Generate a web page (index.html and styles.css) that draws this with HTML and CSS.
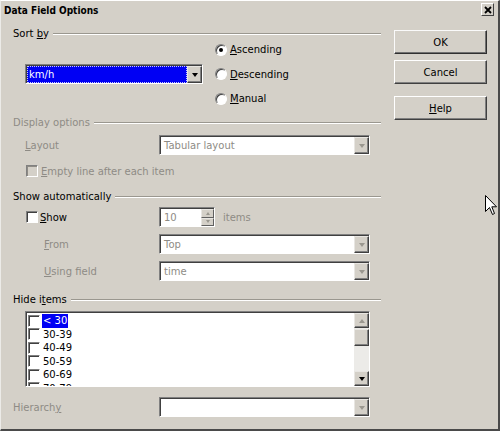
FILE: index.html
```html
<!DOCTYPE html>
<html>
<head>
<meta charset="utf-8">
<link rel="stylesheet" href="styles.css">
</head>
<body>
<div class="win">
  <div class="titlebar">
    <span class="title">Data Field Options</span>
    <span class="close"><svg width="8" height="8" viewBox="0 0 8 8"><path d="M1 1L7 7M7 1L1 7" stroke="#000" stroke-width="1.8"/></svg></span>
  </div>
  <div class="body">
    <div class="main">
      <div class="hdr"><span>Sort <u>b</u>y</span><i class="rule"></i></div>
      <div class="sortbody">
        <div class="combo sortcombo">
          <div class="field sel"><span>km/h</span></div>
          <div class="dd"><i class="tri"></i></div>
        </div>
        <div class="radios">
          <div class="radio"><i class="rb on"></i><span><u>A</u>scending</span></div>
          <div class="radio"><i class="rb"></i><span><u>D</u>escending</span></div>
          <div class="radio"><i class="rb"></i><span><u>M</u>anual</span></div>
        </div>
      </div>

      <div class="hdr dis m-hdr1"><span>Display options</span><i class="rule"></i></div>
      <div class="row m-layout">
        <span class="lbl dis ind1"><u>L</u>ayout</span>
        <div class="combo wide"><div class="field dis"><span>Tabular layout</span></div><div class="dd"><i class="tri grey"></i></div></div>
      </div>
      <div class="chkrow m-empty dis">
        <i class="cb off"></i><span><u>E</u>mpty line after each item</span>
      </div>

      <div class="hdr m-hdr2"><span>Show automatically</span><i class="rule"></i></div>
      <div class="row m-show">
        <div class="showlbl"><i class="cb"></i><span><u>S</u>how</span></div>
        <div class="spin">
          <div class="field dis"><span>10</span></div>
          <div class="spinbtns"><div class="sb"><i class="tri-up grey"></i></div><div class="sb"><i class="tri grey small"></i></div></div>
        </div>
        <span class="items dis">items</span>
      </div>
      <div class="row m-from">
        <span class="lbl dis ind2"><u>F</u>rom</span>
        <div class="combo wide"><div class="field dis"><span>Top</span></div><div class="dd"><i class="tri grey"></i></div></div>
      </div>
      <div class="row m-from">
        <span class="lbl dis ind2"><u>U</u>sing field</span>
        <div class="combo wide"><div class="field dis"><span>time</span></div><div class="dd"><i class="tri grey"></i></div></div>
      </div>

      <div class="hdr m-hdr2"><span>Hide i<u>t</u>ems</span><i class="rule"></i></div>
      <div class="list">
        <div class="listitems">
          <div class="li"><i class="cb"></i><span class="hl">&lt; 30</span></div>
          <div class="li"><i class="cb"></i><span>30-39</span></div>
          <div class="li"><i class="cb"></i><span>40-49</span></div>
          <div class="li"><i class="cb"></i><span>50-59</span></div>
          <div class="li"><i class="cb"></i><span>60-69</span></div>
          <div class="li"><i class="cb"></i><span>70-79</span></div>
        </div>
        <div class="scroll">
          <div class="sbtn"><i class="tri-up grey"></i></div>
          <div class="thumb"></div>
          <div class="track"></div>
          <div class="sbtn"><i class="tri"></i></div>
        </div>
      </div>
      <div class="row m-hier">
        <span class="lbl dis ind0">Hierarch<u>y</u></span>
        <div class="combo wide"><div class="field dis"><span></span></div><div class="dd"><i class="tri grey"></i></div></div>
      </div>
    </div>

    <div class="buttons">
      <div class="btn def">OK</div>
      <div class="btn">Cancel</div>
      <div class="btn help"><u>H</u>elp</div>
    </div>
  </div>
  <svg class="cursor" width="13" height="21" viewBox="0 0 13 21"><path d="M0.5 0.5V16.5L4.5 12.5L7.5 19.5L9.5 18.5L6.8 11.8H11.5Z" fill="#fff" stroke="#000" stroke-width="1"/></svg>
</div>
</body>
</html>
```

FILE: styles.css
```css
* { box-sizing: border-box; }
html, body { margin: 0; padding: 0; }
body {
  width: 500px; height: 431px; overflow: hidden;
  background: #d4d0c8;
  font-family: "DejaVu Sans", "Liberation Sans", sans-serif;
  font-size: 10px; color: #000;
}
u { text-decoration: underline; text-underline-offset: 1px; }
.win {
  position: relative; width: 500px; height: 431px;
  background: #d4d0c8;
  border-top: 1px solid #fff; border-left: 1px solid #ecebe8;
  border-right: 2px solid #4a4a4a; border-bottom: 2px solid #4a4a4a;
}
.titlebar {
  height: 20px; display: flex; align-items: center; justify-content: space-between;
  padding: 0 4px 0 3px;
}
.title {
  font-family: "DejaVu Sans Condensed", "DejaVu Sans", sans-serif;
  font-stretch: condensed; font-weight: bold; font-size: 10px;
  margin-top: -1px;
}
.close {
  width: 13px; height: 13px; margin-top: -3px;
  display: flex; align-items: center; justify-content: center;
  border-top: 1px solid #fff; border-left: 1px solid #fff;
  border-right: 1px solid #404040; border-bottom: 1px solid #404040;
}
.body { display: flex; padding-left: 12px; }
.main { width: 368px; padding-top: 6px; }
.buttons { width: 93px; margin-left: 13px; padding-top: 9px; display: flex; flex-direction: column; }
.btn {
  height: 24px; display: flex; align-items: center; justify-content: center;
  border-top: 1px solid #fff; border-left: 1px solid #fff;
  border-right: 1px solid #404040; border-bottom: 1px solid #404040;
  box-shadow: inset -1px -1px 0 #808080;
  margin-bottom: 6px;
}
.btn.def { border-color: #fafafa #303030 #303030 #fafafa; box-shadow: inset -1px -1px 0 #707070; }
.btn.help { margin-top: 6px; }

.hdr { height: 12px; display: flex; align-items: center; white-space: nowrap; }
.hdr .rule {
  flex: 1; height: 2px; margin-left: 4px; margin-top: 1px;
  border-top: 1px solid #9a978f; border-bottom: 1px solid #fff;
}
.dis { color: #8e8b85; }

.sortbody { height: 70px; display: flex; align-items: center; }
.combo { display: flex; height: 20px;
  border-top: 1px solid #808080; border-left: 1px solid #808080;
  border-right: 1px solid #fff; border-bottom: 1px solid #fff;
  box-shadow: inset 1px 1px 0 #404040;
  padding: 1px 0 0 1px; background: #fff;
}
.sortcombo { width: 178px; margin-left: 12px; }
.wide { width: 211px; }
.field { flex: 1; display: flex; align-items: center; padding-left: 3px; background: #fff; }
.field.sel { background: #0000f4; color: #fff; outline: 1px dotted #c8c8ff; outline-offset: -1px; padding-left: 2px; }
.dd {
  width: 15px; display: flex; align-items: center; justify-content: center;
  background: #d4d0c8;
  border-top: 1px solid #e8e6e2; border-left: 1px solid #e8e6e2;
  border-right: 1px solid #404040; border-bottom: 1px solid #404040;
  box-shadow: inset -1px -1px 0 #808080;
}
.tri { width: 0; height: 0; border-left: 3.5px solid transparent; border-right: 3.5px solid transparent; border-top: 4px solid #000; }
.tri-up { width: 0; height: 0; border-left: 3.5px solid transparent; border-right: 3.5px solid transparent; border-bottom: 4px solid #000; }
.tri.grey { border-top-color: #9a978f; }
.tri-up.grey { border-bottom-color: #9a978f; }
.tri.small, .sb .tri-up { border-left-width: 2.5px; border-right-width: 2.5px; border-top-width: 3px; }
.sb .tri-up { border-top-width: 0; border-bottom-width: 3px; }

.radios { margin-left: 12px; display: flex; flex-direction: column; gap: 4.5px; }
.radio { height: 20px; display: flex; align-items: center; }
.rb {
  width: 12px; height: 12px; border-radius: 50%; margin-right: 3px;
  background: #fff;
  border-top: 1px solid #808080; border-left: 1px solid #808080;
  border-right: 1px solid #fff; border-bottom: 1px solid #fff;
  box-shadow: inset 1px 1px 0 #404040;
  position: relative;
}
.rb.on::after { content: ""; position: absolute; left: 3px; top: 3px; width: 4px; height: 4px; border-radius: 50%; background: #000; }

.m-hdr1 { margin-top: 7px; }
.m-hdr2 { margin-top: 12px; }
.row { height: 20px; display: flex; align-items: center; }
.m-layout { margin-top: 7px; }
.m-show { margin-top: 5px; }
.m-from { margin-top: 7px; }
.m-hier { margin-top: 10px; }
.lbl { width: 146px; }
.ind1 { padding-left: 12px; }
.ind2 { padding-left: 31px; }
.ind0 { padding-left: 0; }

.cb {
  width: 12px; height: 12px; flex: none; background: #fff;
  border-top: 1px solid #808080; border-left: 1px solid #808080;
  border-right: 1px solid #fff; border-bottom: 1px solid #fff;
  box-shadow: inset 1px 1px 0 #404040;
}
.cb.off { background: #d4d0c8; box-shadow: inset 1px 1px 0 #8e8b85; }
.chkrow { margin-top: 9px; height: 14px; display: flex; align-items: center; padding-left: 13px; gap: 3px; }
.showlbl { width: 146px; display: flex; align-items: center; padding-left: 13px; gap: 2px; }

.spin { width: 56px; height: 20px; display: flex;
  border-top: 1px solid #808080; border-left: 1px solid #808080;
  border-right: 1px solid #fff; border-bottom: 1px solid #fff;
  box-shadow: inset 1px 1px 0 #404040; padding: 1px 0 0 1px; background: #fff; }
.spinbtns { width: 13px; display: flex; flex-direction: column; background: #d4d0c8; }
.sb { flex: 1; display: flex; align-items: center; justify-content: center;
  border-top: 1px solid #e8e6e2; border-left: 1px solid #e8e6e2;
  border-right: 1px solid #606060; border-bottom: 1px solid #606060; }
.items { margin-left: 8px; }

.list {
  margin-top: 6px; margin-left: 12px; width: 345px; height: 76px; display: flex;
  border-top: 1px solid #808080; border-left: 1px solid #808080;
  border-right: 1px solid #fff; border-bottom: 1px solid #fff;
  box-shadow: inset 1px 1px 0 #404040; padding: 1px 0 0 1px; background: #fff;
  overflow: hidden;
}
.listitems { flex: 1; overflow: hidden; padding-left: 1px; padding-top: 1px; }
.li { height: 13.5px; display: flex; align-items: center; gap: 3px; }
.hl { background: #0000f4; color: #fff; padding: 0 1px; margin-left: -1px; line-height: 14px; }
.scroll { width: 15px; display: flex; flex-direction: column; background: #ecebe8; }
.sbtn, .thumb { height: 15px; display: flex; align-items: center; justify-content: center; background: #d4d0c8;
  border-top: 1px solid #e8e6e2; border-left: 1px solid #e8e6e2;
  border-right: 1px solid #404040; border-bottom: 1px solid #404040;
  box-shadow: inset -1px -1px 0 #808080; }
.thumb { height: 17px; margin-top: 1px; }
.track { flex: 1; }

.cursor { position: absolute; left: 484px; top: 194px; }
```
